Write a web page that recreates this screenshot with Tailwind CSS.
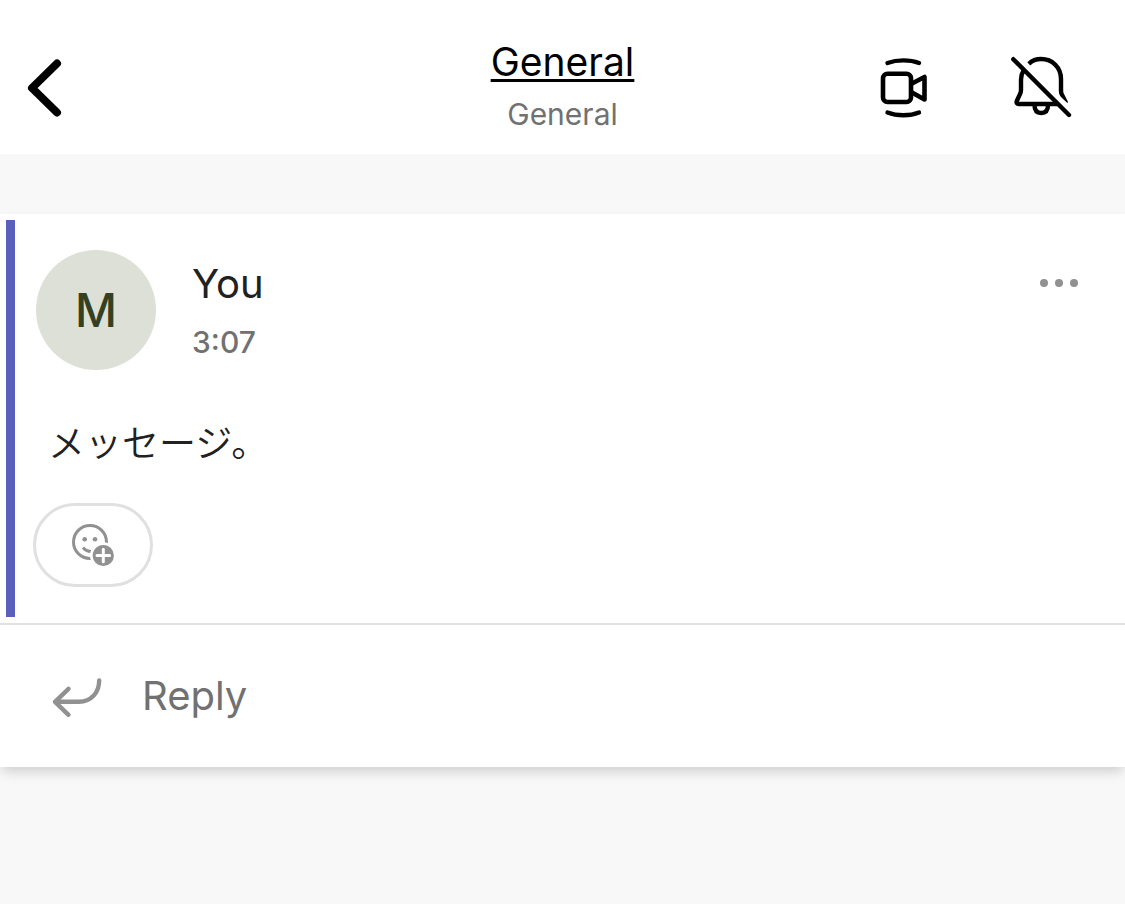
<!DOCTYPE html>
<html lang="en">
<head>
  <meta charset="UTF-8" />
  <meta name="viewport" content="width=device-width, initial-scale=1" />
  <title>General</title>
  <script src="https://cdn.jsdelivr.net/npm/@tailwindcss/browser@4"></script>
</head>
<body class="min-h-screen bg-[#f8f8f8] font-['Inter','Noto_Sans_CJK_JP',sans-serif] text-[#212121]">

  <header class="grid grid-cols-[1fr_auto_1fr] items-center bg-white px-6 pt-[42px] pb-5">
    <button type="button" aria-label="Back" class="justify-self-start">
      <svg class="block h-16 w-10" viewBox="24 56 40 64" fill="none" stroke="#000" stroke-width="8" stroke-linecap="round" stroke-linejoin="round">
        <path d="M57 63.500L32 88L57 112.500" />
      </svg>
    </button>

    <div class="text-center">
      <h1 class="text-[39px] leading-10">
        <a href="#" class="text-black underline decoration-3 underline-offset-3">General</a>
      </h1>
      <p class="mt-3 text-[30px] leading-10 text-[#717171]">General</p>
    </div>

    <div class="mr-[30px] flex gap-[78px] justify-self-end">
      <button type="button" aria-label="Meet now">
        <svg class="block size-[60px]" viewBox="13 18 60 60" fill="none" stroke="#000" stroke-width="4.600" stroke-linecap="round" stroke-linejoin="round">
          <path d="M27.500 23C37 19.500 50 19.500 59 23M27.500 72.500C37 76.200 50 76.200 59 72.500" stroke-width="4.400" />
          <rect x="23" y="33.700" width="28" height="28.300" rx="4.500" />
          <path d="M52 43.500L64.500 37V59.500L52 52.500" />
        </svg>
      </button>
      <button type="button" aria-label="Turn on notifications">
        <svg class="block size-[60px] overflow-visible" viewBox="16 18 60 60" fill="none" stroke="#000" stroke-width="4.400" stroke-linejoin="round">
          <path d="M18.300 19.200L74 75" stroke-linecap="round" />
          <path d="M33.800 23.800C37.200 20.500 41.300 19 46 19C57.500 19 66 27.500 66 39V50.500" />
          <path d="M63.800 50H68.200C68.200 51.500 68.300 52.500 68.800 53.500L72.800 61.500C73.200 62.500 72.600 63.200 71.800 62.500L66.500 57.500C64.500 55.500 63.800 53 63.800 50Z" fill="#000" stroke="none" />
          <path d="M28.600 30.500C26.800 33.200 26 36 26 39.500V50C26 52 25.600 53 24.800 54.600L22 60.500C21 62.700 21.800 64 24 64H62.500" />
          <path d="M39.500 65C39.500 70.500 42 73 46.200 73C50.500 73 53 70.500 53 65" />
        </svg>
      </button>
    </div>
  </header>

  <main class="mt-[60px] bg-white shadow-[0_6px_12px_-2px_rgba(0,0,0,0.18)]">
    <article class="border-b-2 border-[#e0e0e0] p-[6px]">
      <div class="border-l-9 border-[#5b5fbc] py-[30px]">
        <div class="flex items-start pr-10 pl-[21px]">
          <div class="flex size-[120px] items-center justify-center rounded-full bg-[#dde0d7] text-[46px] font-medium text-[#354022]">M</div>
          <div class="ml-[36px] pt-2">
            <h2 class="text-[40px] leading-[52px]">You</h2>
            <time class="mt-[14px] block text-[30px] leading-[36px] font-medium text-[#717171]">3:07</time>
          </div>
          <button type="button" aria-label="More options" class="mt-[23px] ml-auto">
            <svg class="block h-5 w-10" viewBox="0 0 40 20" fill="#919191">
              <circle cx="5" cy="10" r="4" />
              <circle cx="20" cy="10" r="4" />
              <circle cx="35" cy="10" r="4" />
            </svg>
          </button>
        </div>

        <p lang="ja" class="mt-11 pl-[33px] text-[37px] leading-[60px] font-[350]">メッセージ。</p>

        <button type="button" aria-label="Add reaction" class="mt-[29px] ml-[18px] flex h-[84px] w-[120px] items-center justify-center rounded-full border-3 border-[#e0e0e0]">
          <svg class="size-11" viewBox="11 13 44 44" fill="none">
            <circle cx="30" cy="32" r="16.500" stroke="#919191" stroke-width="3" />
            <circle cx="24.700" cy="29.300" r="2.300" fill="#919191" />
            <circle cx="35" cy="29.300" r="2.300" fill="#919191" />
            <path d="M23 37.500C25.500 40.700 28.500 42 33 41.200" stroke="#919191" stroke-width="3" />
            <circle cx="43.300" cy="45.500" r="13.300" fill="#fff" />
            <circle cx="43.300" cy="45.500" r="10.600" fill="#919191" />
            <path d="M43.300 39.200V51.800M37 45.500H49.600" stroke="#fff" stroke-width="3" stroke-linecap="round" />
          </svg>
        </button>
      </div>
    </article>

    <button type="button" class="flex h-[142px] w-full items-center pl-[52px] text-[40px] text-[#717171]">
      <svg class="h-10 w-[50px] overflow-visible" viewBox="22 16 50 40" fill="none" stroke="#919191" stroke-width="4.400" stroke-linecap="round" stroke-linejoin="round">
        <path d="M38.500 28.800L25 41.800L38.500 54.800M25 41.800H49C61 41.800 69 33 69.200 20.500" />
      </svg>
      <span class="ml-10">Reply</span>
    </button>
  </main>

</body>
</html>
